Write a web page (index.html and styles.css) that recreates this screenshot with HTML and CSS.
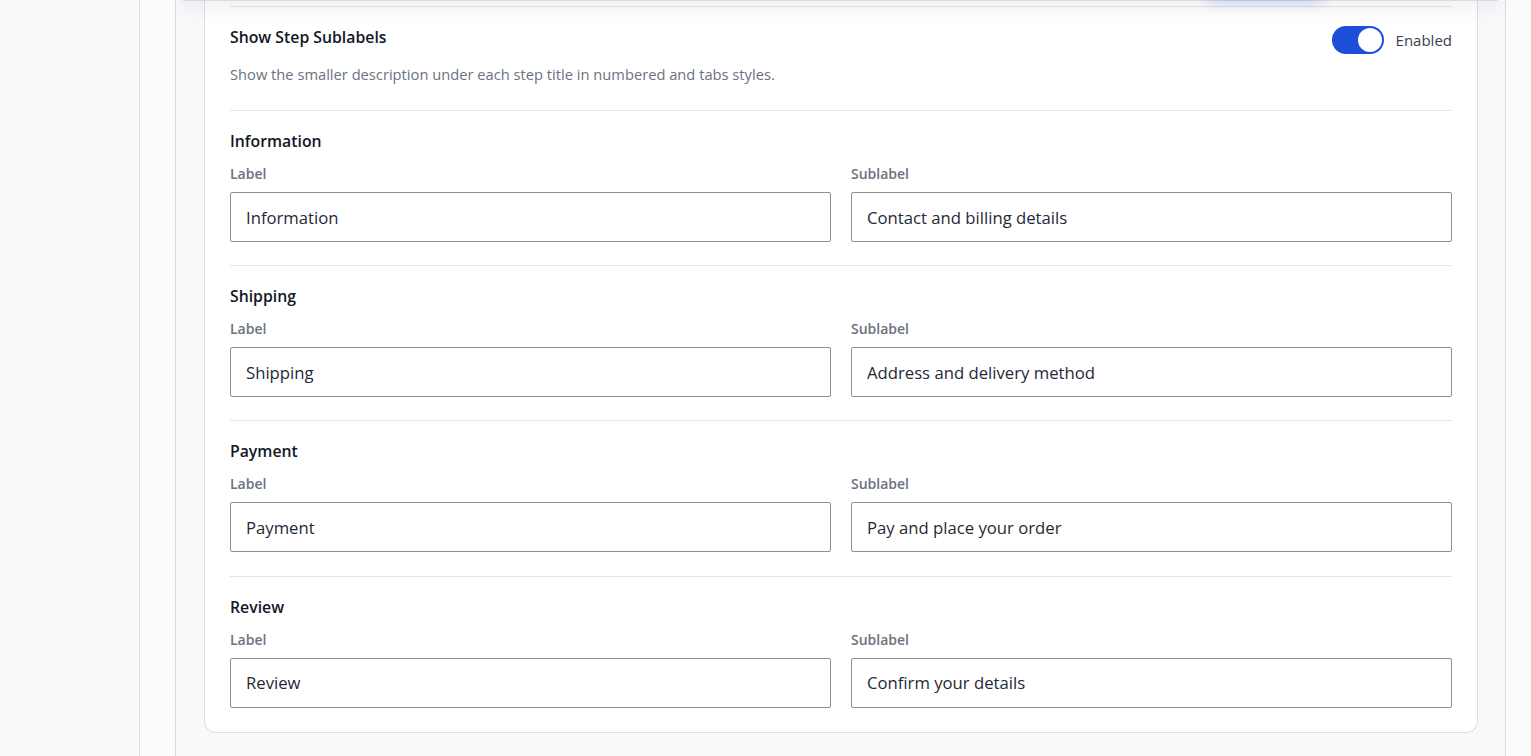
FILE: index.html
```html
<!DOCTYPE html>
<html lang="en">
<head>
  <meta charset="UTF-8">
  <meta name="viewport" content="width=device-width, initial-scale=1.0">
  <title>Checkout Steps</title>
  <link rel="stylesheet" href="styles.css">
</head>
<body>
  <div class="layout">
    <aside class="sidebar"></aside>

    <main class="main">
      <div class="panel">
        <div class="panel-header"></div>

        <div class="card">
          <div class="setting-row">
            <div class="setting-text">
              <div class="setting-title">Show Step Sublabels</div>
              <p class="setting-desc">Show the smaller description under each step title in numbered and tabs styles.</p>
            </div>
            <label class="toggle">
              <input type="checkbox" checked>
              <span class="track"><span class="knob"></span></span>
              <span class="toggle-label">Enabled</span>
            </label>
          </div>

          <div class="step">
            <div class="step-title">Information</div>
            <div class="fields">
              <div class="field">
                <label class="field-label">Label</label>
                <input class="field-input" type="text" value="Information">
              </div>
              <div class="field">
                <label class="field-label">Sublabel</label>
                <input class="field-input" type="text" value="Contact and billing details">
              </div>
            </div>
          </div>

          <div class="step">
            <div class="step-title">Shipping</div>
            <div class="fields">
              <div class="field">
                <label class="field-label">Label</label>
                <input class="field-input" type="text" value="Shipping">
              </div>
              <div class="field">
                <label class="field-label">Sublabel</label>
                <input class="field-input" type="text" value="Address and delivery method">
              </div>
            </div>
          </div>

          <div class="step">
            <div class="step-title">Payment</div>
            <div class="fields">
              <div class="field">
                <label class="field-label">Label</label>
                <input class="field-input" type="text" value="Payment">
              </div>
              <div class="field">
                <label class="field-label">Sublabel</label>
                <input class="field-input" type="text" value="Pay and place your order">
              </div>
            </div>
          </div>

          <div class="step last">
            <div class="step-title">Review</div>
            <div class="fields">
              <div class="field">
                <label class="field-label">Label</label>
                <input class="field-input" type="text" value="Review">
              </div>
              <div class="field">
                <label class="field-label">Sublabel</label>
                <input class="field-input" type="text" value="Confirm your details">
              </div>
            </div>
          </div>
        </div>
      </div>
    </main>
  </div>
</body>
</html>
```

FILE: styles.css
```css
* {
  box-sizing: border-box;
}

body {
  margin: 0;
  font-family: "Open Sans", "Noto Sans", sans-serif;
  background: #fbfbfc;
  color: #111827;
  height: 100vh;
  overflow: hidden;
}

.layout {
  display: flex;
  height: 100vh;
}

.sidebar {
  width: 140px;
  flex-shrink: 0;
  background: #f8fafc;
  border-right: 1px solid #dfe1e7;
}

.main {
  flex: 1;
  padding: 0 25px 0 35px;
  background: #fbfbfc;
}

.panel {
  position: relative;
  height: 100%;
  background: #f8f9fb;
  border-left: 1px solid #dadce2;
  border-right: 1px solid #dadce2;
  padding: 0 27px 0 28px;
}

.panel-header {
  position: absolute;
  top: -40px;
  left: 7px;
  right: 7px;
  height: 41px;
  background: #ffffff;
  border-bottom: 1px solid #d9dae2;
  box-shadow: 0 6px 20px rgba(17, 24, 39, 0.07);
  z-index: 2;
}

.panel-header::after {
  content: "";
  position: absolute;
  right: 175px;
  bottom: 4px;
  width: 115px;
  height: 10px;
  border-radius: 8px;
  box-shadow: 0 5px 14px rgba(37, 70, 220, 0.28);
}

.card {
  background: #ffffff;
  border: 1px solid #dcdde3;
  border-top: none;
  border-radius: 0 0 12px 12px;
  padding: 6px 25px 24px;
}

.setting-row {
  display: flex;
  justify-content: space-between;
  align-items: flex-start;
  border-top: 1px solid #e3e4e9;
  border-bottom: 1px solid #e3e4e9;
  padding: 20px 0 26px;
}

.setting-title,
.step-title {
  font-size: 15.8px;
  font-weight: 600;
  line-height: 20px;
  color: #111827;
}

.setting-desc {
  margin: 17px 0 0;
  font-size: 14.7px;
  line-height: 20px;
  color: #6b7280;
}

.toggle {
  display: flex;
  align-items: center;
  gap: 12px;
  margin-top: -1px;
  cursor: pointer;
}

.toggle input {
  display: none;
}

.track {
  display: flex;
  align-items: center;
  justify-content: flex-end;
  width: 52px;
  height: 28px;
  padding: 2px;
  border-radius: 14px;
  background: #1d4ed8;
}

.knob {
  width: 24px;
  height: 24px;
  border-radius: 50%;
  background: #ffffff;
}

.toggle-label {
  font-size: 15px;
  color: #374151;
}

.step {
  padding: 20px 0 23.2px;
  border-bottom: 1px solid #e3e4e9;
}

.step.last {
  border-bottom: none;
  padding-bottom: 0;
}

.fields {
  display: grid;
  grid-template-columns: 1fr 1fr;
  gap: 20px;
  margin-top: 13px;
}

.field {
  display: flex;
  flex-direction: column;
  gap: 8px;
}

.field-label {
  font-size: 14px;
  font-weight: 600;
  line-height: 20px;
  color: #6b7280;
}

.field-input {
  height: 50px;
  width: 100%;
  padding: 0 15px;
  border: 1px solid #8d8f94;
  border-radius: 2px;
  font-family: inherit;
  font-size: 16.7px;
  color: #1f2937;
  background: #ffffff;
}
```
